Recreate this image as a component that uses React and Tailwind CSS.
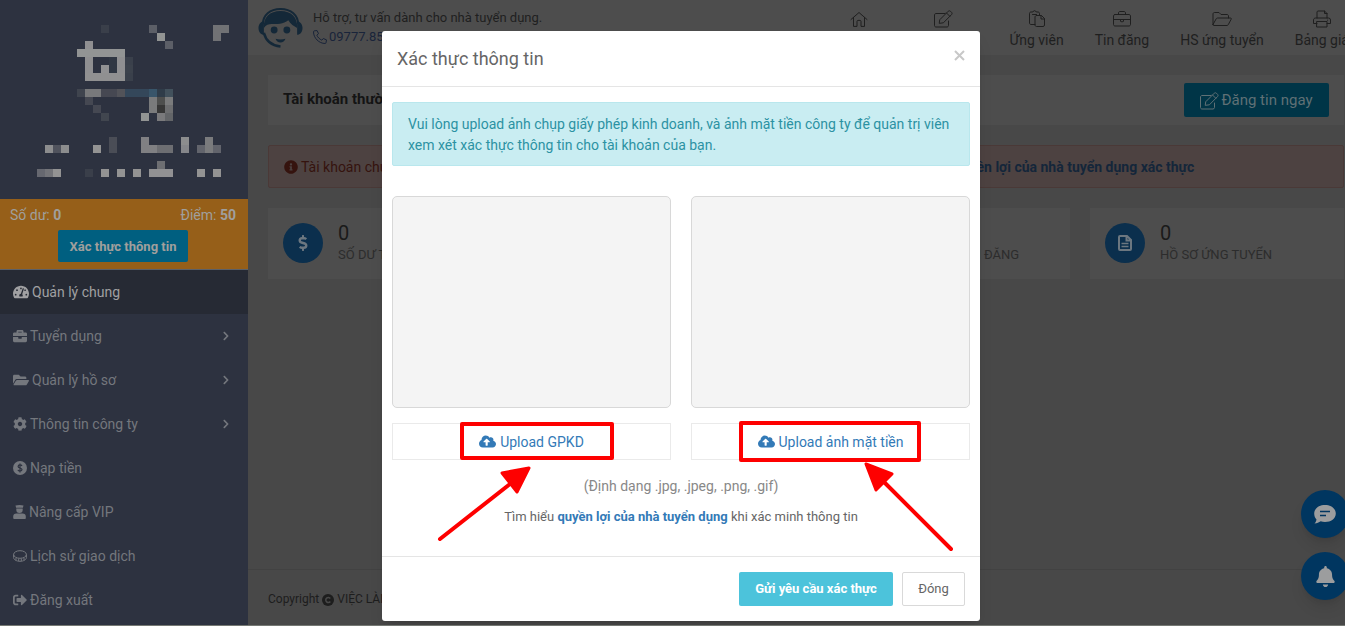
import {
  FaBell,
  FaBriefcase,
  FaChevronRight,
  FaCloudUploadAlt,
  FaCog,
  FaDollarSign,
  FaFolderOpen,
  FaInfoCircle,
  FaSignOutAlt,
  FaTachometerAlt,
} from 'react-icons/fa'

// [column, row, colour, cells wide] on an 8px grid
const logoCells = [
  [12, 3, '#3a3f4a'], [18, 3, '#5c5f67'], [26, 3, '#717275', 2],
  [19, 4, '#929493'], [26, 4, '#717275'],
  [10, 5, '#8f8f91'], [20, 5, '#5c5f67'],
  [9, 6, '#929494', 6],
  [10, 7, '#8f8f91'], [13, 7, '#303743'], [14, 7, '#8f8f91'], [15, 7, '#3a404b'],
  [10, 8, '#8f8f91'], [12, 8, '#919193'], [13, 8, '#303743'], [14, 8, '#8f8f91'], [15, 8, '#3c424c'],
  [10, 9, '#909091', 5], [15, 9, '#3a404b'],
  [9, 11, '#3f444e'], [10, 11, '#78797b', 2], [12, 11, '#464852', 2], [14, 11, '#525359'],
  [15, 11, '#34475a', 3], [18, 11, '#38556a'], [19, 11, '#2f3c49'], [20, 11, '#42515c'],
  [10, 12, '#454852'], [18, 12, '#7a7b7c'], [19, 12, '#4e4f4e'], [20, 12, '#7a7b7c'],
  [11, 13, '#454852'], [18, 13, '#7a7b7c'], [19, 13, '#373737'], [20, 13, '#6d6e70'],
  [12, 14, '#41464f'], [17, 14, '#929493'], [19, 14, '#7a7a7c'], [20, 14, '#636568'],
  [13, 17, '#4a4d56'], [17, 17, '#808083'], [22, 17, '#8c8d8e'], [25, 17, '#7a7b7d'],
  [5, 18, '#8c8d8e'], [6, 18, '#50535d'], [7, 18, '#8c8d8e'], [11, 18, '#939393'], [13, 18, '#4a4d56'],
  [17, 18, '#808083', 2], [19, 18, '#6d6e72', 2], [22, 18, '#85868a'], [24, 18, '#62646c'],
  [25, 18, '#7a7b7d'], [26, 18, '#62646c'],
  [19, 20, '#6d6e72'],
  [4, 21, '#666870'], [5, 21, '#737479'], [6, 21, '#939393'], [10, 21, '#3a3f4a'], [12, 21, '#939393'],
  [14, 21, '#939393'], [16, 21, '#939393'], [18, 21, '#919193', 3], [24, 21, '#939393'], [26, 21, '#939393'],
]

function Logo() {
  return (
    <svg width="248" height="199" viewBox="0 0 248 199" shapeRendering="crispEdges" aria-hidden="true">
      {logoCells.map(([c, r, fill, n = 1]) => (
        <rect key={`${c}-${r}`} x={5 + c * 8} y={1 + r * 8} width={8 * n} height="8" fill={fill} />
      ))}
    </svg>
  )
}

function CoinBadge() {
  return (
    <svg width="14" height="14" viewBox="0 0 14 14" aria-hidden="true">
      <circle cx="7" cy="7" r="7" fill="currentColor" />
      <path d="M9 4.9C8.6 4.2 7.900 3.900 7 3.900 5.900 3.900 5.100 4.500 5.100 5.400c0 2 3.900 1.100 3.900 3.200 0 .9-.8 1.500-2 1.500-1 0-1.800-.4-2.100-1.200M7 2.500v9" fill="none" stroke="#2d3240" strokeWidth="1.200" />
    </svg>
  )
}

function VipUser() {
  return (
    <svg width="13" height="14" viewBox="0 0 13 14" fill="currentColor" aria-hidden="true">
      <path d="M2.500.6 6.500 0l4 .6-.6 2.200H3.100zM3.300 3.500h6.400v1.200a3.200 3.200 0 0 1-6.400 0zM3.500 8.500h6A3.300 3.300 0 0 1 12.800 12v1c0 .6-.4 1-1 1H1.200a1 1 0 0 1-1-1v-1a3.300 3.300 0 0 1 3.300-3.500z" />
    </svg>
  )
}

function Coin() {
  return (
    <svg width="14" height="12" viewBox="0 0 14 12" fill="none" stroke="currentColor" aria-hidden="true">
      <ellipse cx="7" cy="4.500" rx="6.400" ry="3.800" />
      <path d="M.6 4.500v3c0 2.100 2.900 3.800 6.400 3.800s6.400-1.700 6.400-3.800v-3M3 8v2.500M5.700 8.500v2.700M8.300 8.500v2.700M11 8v2.500" />
    </svg>
  )
}

function Line({ width = 18, children }) {
  return (
    <svg width={width} height="18" viewBox={`0 0 ${width} 18`} fill="none" stroke="currentColor" strokeLinejoin="round" strokeLinecap="round" aria-hidden="true">
      {children}
    </svg>
  )
}

const HomeIcon = () => (
  <Line>
    <path d="M1 9.500 9 2.500l8 7M3.500 7.500v8.900H7v-5c0-.6.4-1 1-1h2c.6 0 1 .4 1 1v5h3.500V7.500" />
  </Line>
)

const EditIcon = () => (
  <Line width={20}>
    <path d="M11 3.500H2c-.8 0-1.500.7-1.500 1.500v10.500c0 .8.7 1.500 1.500 1.500h11c.8 0 1.500-.7 1.500-1.500v-4.500M6 9.500l8.300-8.300c.6-.6 1.500-.6 2.100 0l1.200 1.200c.6.6.6 1.500 0 2.100L9.400 12.800l-3.800.5zM12.500 3l3.300 3.300" />
  </Line>
)

const PasteIcon = () => (
  <Line width={16}>
    <path d="M6 14.500H2c-.8 0-1.500-.6-1.500-1.400V3.400C.5 2.600 1.200 2 2 2h1.800c.3-.9 1-1.300 1.700-1.300S7 1.100 7.300 2H9c.8 0 1.500.6 1.500 1.400V5M3.500 4.500h4M7.500 5.500h5l3 3V15c0 .8-.6 1.500-1.400 1.500H7.500C6.700 16.500 6 15.800 6 15V7c0-.8.700-1.500 1.500-1.500zM12 5.500V9h3.500" />
  </Line>
)

const CaseIcon = () => (
  <Line>
    <path d="M2 4.500h14c.8 0 1.500.7 1.500 1.500v8.500c0 .8-.7 1.500-1.500 1.500H2c-.8 0-1.500-.7-1.500-1.500V6c0-.8.7-1.500 1.500-1.500zM5.500 4.500V3c0-.8.6-1.500 1.400-1.500h4.200c.8 0 1.400.7 1.400 1.500v1.500M.5 9.500h17M7.500 9.500v1.600c0 .4.300.6.600.6h1.800c.3 0 .6-.2.6-.6V9.500" />
  </Line>
)

const FolderIcon = () => (
  <Line width={20}>
    <path d="M1 14V4c0-.8.6-1.500 1.400-1.500H7l2 2h6c.8 0 1.500.6 1.500 1.400V8M1 14.500l3.200-5.700c.3-.5.700-.8 1.300-.8h13c.7 0 1 .6.700 1.200l-2.900 5.400c-.3.5-.7.900-1.300.9H2c-.8 0-1.200-.5-1-1z" />
  </Line>
)

const PrintIcon = () => (
  <Line>
    <path d="M4 8V2c0-.6.5-1 1-1h6.500L14 3.500V8M11.500 1v2.500H14M4 13.500H.5V10c0-1.100.9-2 2-2h13a2 2 0 0 1 2 2v3.500H14M4 11.500h10V17H4zM14.500 10.200h.2" />
  </Line>
)

const PhoneIcon = () => (
  <svg width="14" height="14" viewBox="0 0 14 14" fill="none" stroke="currentColor" strokeLinejoin="round" aria-hidden="true">
    <path d="M1.200.9 4 .5l1.500 3.200-1.700 1.500c.9 2 2.600 3.800 5 5l1.500-1.700 3.200 1.400-.5 2.900c-.1.400-.4.700-.8.700C6 13.500.5 8 .5 1.800c0-.4.3-.8.700-.9z" />
  </svg>
)

function SupportFace() {
  return (
    <svg width="45" height="42" viewBox="0 0 46 42" aria-hidden="true">
      <path d="M5 17C5 8 12 1.500 23 1.500S41 8 41 17" fill="none" stroke="#142838" strokeWidth="2" />
      <path d="M6 21C5 10 12 3.500 23 3.500S41 10 40 21c-3-2-7-4-9-8-5 4-12 4-17 4-3 0-6 1-8 4z" fill="#142838" />
      <path d="M6 14c-3 0-5.500 3-5.500 7S3 28 6 28zM40 14c3 0 5.500 3 5.500 7S43 28 40 28z" fill="#142838" />
      <circle cx="16.500" cy="23" r="3.500" fill="#142838" />
      <circle cx="29.500" cy="23" r="3.500" fill="#142838" />
      <path d="M18 32c3 1 7 1 10 0-1 5-9 5-10 0z" fill="#142838" />
      <path d="M6 26c2 8 8 13 17 14" fill="none" stroke="#142838" strokeWidth="2.500" />
    </svg>
  )
}

const FileIcon = () => (
  <svg width="14" height="16" viewBox="0 0 14 16" fill="none" stroke="currentColor" strokeWidth="2" aria-hidden="true">
    <path d="M2 1h7l4 4v9c0 .6-.4 1-1 1H2c-.6 0-1-.4-1-1V2c0-.6.4-1 1-1zM8.500 1v4.500H13" />
    <path d="M3.500 8.500h7M3.500 11.500h7" strokeWidth="1.500" />
  </svg>
)

const menu = [
  { label: 'Quản lý chung', icon: <FaTachometerAlt size={16} />, active: true },
  { label: 'Tuyển dụng', icon: <FaBriefcase size={14} />, sub: true },
  { label: 'Quản lý hồ sơ', icon: <FaFolderOpen size={16} />, sub: true },
  { label: 'Thông tin công ty', icon: <FaCog size={14} />, sub: true },
  { label: 'Nạp tiền', icon: <CoinBadge /> },
  { label: 'Nâng cấp VIP', icon: <VipUser /> },
  { label: 'Lịch sử giao dịch', icon: <Coin /> },
  { label: 'Đăng xuất', icon: <FaSignOutAlt size={14} /> },
]

const topNav = [
  { label: 'Home', icon: <HomeIcon /> },
  { label: 'Tạo tin mới', icon: <EditIcon /> },
  { label: 'Ứng viên', icon: <PasteIcon /> },
  { label: 'Tin đăng', icon: <CaseIcon /> },
  { label: 'HS ứng tuyển', icon: <FolderIcon /> },
  { label: 'Bảng giá', icon: <PrintIcon /> },
]

const stats = [
  { label: 'SỐ DƯ TÀI KHOẢN', icon: <FaDollarSign size={16} /> },
  { label: 'ĐIỂM', icon: <FaDollarSign size={16} /> },
  { label: 'TẤT CẢ CÁC TIN ĐĂNG', icon: <FileIcon /> },
  { label: 'HỒ SƠ ỨNG TUYỂN', icon: <FileIcon /> },
]

function Sidebar() {
  return (
    <aside className="w-[248px] shrink-0 bg-[#2d3240] text-[#74777d]">
      <Logo />
      <div className="border-b border-[#5b6068] bg-[#965f19] pt-[6px] pr-3 pb-[7px] pl-[10px] text-[#a09f9d]">
        <div className="flex justify-between leading-5">
          <span>Số dư: <b>0</b></span>
          <span>Điểm: <b>50</b></span>
        </div>
        <button className="mx-auto mt-[5px] block h-8 w-[130px] rounded-xs bg-[#005f80] pt-[2px] text-[13px] font-bold">
          Xác thực thông tin
        </button>
      </div>
      <nav>
        {menu.map((item) => (
          <a
            key={item.label}
            href="#"
            className={
              item.active
                ? 'flex h-11 items-center gap-[3px] bg-[#262a34] pr-[17px] pl-[13px] text-[#a0a0a2]'
                : 'flex h-11 items-center gap-[3px] pr-[17px] pl-[13px]'
            }
          >
            {item.icon}
            <span>{item.label}</span>
            {item.sub && <FaChevronRight size={10} className="ml-auto" />}
          </a>
        ))}
      </nav>
    </aside>
  )
}

function Header() {
  return (
    <header className="flex h-[55px] bg-[#4d4d4d] pl-[10px] text-[#1f1f1f]">
      <div className="flex shrink-0 gap-[10px] pt-[7px]">
        <SupportFace />
        <div className="pt-px text-[13px] leading-[19px]">
          <div>Hỗ trợ, tư vấn dành cho nhà tuyển dụng.</div>
          <a href="#" className="flex items-center gap-[2px] text-[#19243a]">
            <PhoneIcon /> 09777.85.885
          </a>
        </div>
      </div>
      <nav className="-mr-1 ml-auto flex shrink-0 gap-[31px] pt-[10px]">
        {topNav.map((item) => (
          <a key={item.label} href="#" className="flex flex-col items-center gap-[2px] leading-5">
            {item.icon}
            {item.label}
          </a>
        ))}
      </nav>
    </header>
  )
}

function Dashboard() {
  return (
    <main className="pt-5 pr-px pl-5">
      <div className="flex h-[50px] items-center justify-between bg-[#4d4d4d] px-[15px]">
        <b className="text-[15px] text-[#141414]">Tài khoản thường</b>
        <button className="flex h-[34px] w-[145px] items-center justify-center gap-px rounded-xs bg-[#003547] pt-px text-[15px] text-[#5f7075]">
          <EditIcon /> Đăng tin ngay
        </button>
      </div>
      <div className="mt-5 flex h-[43px] items-center gap-[3px] rounded-xs border border-[#4a3937] bg-[#4d4241] px-[15px] whitespace-nowrap text-[#35130e]">
        <FaInfoCircle size={14} />
        <p>
          Tài khoản chưa được xác thực. Vui lòng cập nhật thông tin và giấy phép kinh doanh của công ty. Tìm hiểu{' '}
          <a href="#" className="font-bold text-[#14263a]">quyền lợi của nhà tuyển dụng xác thực</a>
        </p>
      </div>
      <div className="mt-5 grid grid-cols-4 gap-5">
        {stats.map((s) => (
          <div key={s.label} className="flex h-[71px] items-center gap-[15px] bg-[#4d4d4d] px-[15px] pb-px">
            <div className="flex size-10 shrink-0 items-center justify-center rounded-full bg-[#0b2f4d] text-[#6c7780]">
              {s.icon}
            </div>
            <div className="whitespace-nowrap">
              <div className="text-xl leading-6 text-[#1a1a1a]">0</div>
              <div className="text-[13px] leading-5 text-[#2c2c2c]">{s.label}</div>
            </div>
          </div>
        ))}
      </div>
    </main>
  )
}

function UploadSlot({ label }) {
  return (
    <div className="min-w-0 flex-1">
      <div className="h-[212px] rounded-[5px] border border-[#d8d8d8] bg-[#f4f4f4]" />
      <button className="mt-[15px] flex h-[37px] w-full items-center justify-center gap-1 border border-[#eaeaea] text-[#337ab7]">
        <FaCloudUploadAlt size={17} /> {label}
      </button>
    </div>
  )
}

// highlight frames and arrows laid over the dialog
function Marks() {
  return (
    <svg className="pointer-events-none absolute top-0 left-0" width="598" height="590" viewBox="0 0 598 590" fill="none" stroke="#fe0000" strokeWidth="4" strokeLinejoin="round" strokeLinecap="round" aria-hidden="true">
      <rect x="80" y="393" width="150" height="34" />
      <rect x="359" y="392" width="178" height="37" />
      <path d="M58 508 128 453M569 518 502 451" />
      <path d="M147 437 120 442 135 461zM484 433 510 443 494 459z" fill="#fe0000" strokeWidth="3" />
    </svg>
  )
}

function VerifyModal() {
  return (
    <div className="absolute inset-0 flex items-start justify-center pt-[31px] pl-[17px]">
      <div role="dialog" aria-labelledby="verify-title" className="relative w-[598px] rounded-[3px] bg-white text-[#666] shadow-lg">
        <div className="flex h-14 items-center justify-between border-b border-[#e5e5e5] px-[15px]">
          <h4 id="verify-title" className="text-lg">Xác thực thông tin</h4>
          <button aria-label="Đóng hộp thoại" className="pb-[6px] text-[#c8c8c8]">
            <svg width="11" height="11" viewBox="0 0 11 11" stroke="currentColor" strokeWidth="2" aria-hidden="true">
              <path d="m1 1 9 9M10 1l-9 9" />
            </svg>
          </button>
        </div>
        <div className="px-[10px] pt-[15px] pb-[29px] text-center">
          <div className="rounded-xs border border-[#b9e7ed] bg-[#c9edf2] px-[15px] pt-[11px] pb-[9px] text-left leading-[21px] text-[#2c92a3]">
            Vui lòng upload ảnh chụp giấy phép kinh doanh, và ảnh mặt tiền công ty để quản trị viên xem xét xác thực thông tin cho tài khoản của bạn.
          </div>
          <div className="mt-[30px] flex gap-5">
            <UploadSlot label="Upload GPKD" />
            <UploadSlot label="Upload ảnh mặt tiền" />
          </div>
          <p className="mt-4 leading-5 text-[#888]">(Định dạng .jpg, .jpeg, .png, .gif)</p>
          <p className="mt-[11px] text-[13px] leading-5">
            Tìm hiểu <a href="#" className="font-bold text-[#337ab7]">quyền lợi của nhà tuyển dụng</a> khi xác minh thông tin
          </p>
        </div>
        <div className="flex justify-end gap-[9px] border-t border-[#e5e5e5] p-[15px] text-[13px]">
          <button className="h-[34px] w-[154px] rounded-xs bg-[#4cc3db] font-bold text-white">
            Gửi yêu cầu xác thực
          </button>
          <button className="h-[34px] w-[63px] rounded-xs border border-[#d9d9d9]">Đóng</button>
        </div>
        <Marks />
      </div>
    </div>
  )
}

export default function App() {
  return (
    <div className="relative flex min-h-screen overflow-hidden border-b border-[#757873] bg-[#484848] font-[Roboto,sans-serif] text-sm">
      <Sidebar />
      <div className="flex min-w-0 flex-1 flex-col">
        <Header />
        <Dashboard />
        <footer className="mt-auto flex h-14 items-center gap-[3px] border-t border-[#424242] px-5 pt-1 text-[12px] text-[#1d1d1d]">
          Copyright
          <svg width="12" height="12" viewBox="0 0 12 12" aria-hidden="true">
            <circle cx="6" cy="6" r="6" fill="currentColor" />
            <path d="M8.300 4.500a2.500 2.500 0 1 0 0 3" fill="none" stroke="#484848" strokeWidth="1.500" />
          </svg>
          VIỆC LÀM
        </footer>
      </div>
      <VerifyModal />
      <div className="absolute -right-[4px] bottom-[25px] flex flex-col gap-[14px] text-[#9c9d9e]">
        <button aria-label="Tin nhắn" className="flex size-12 items-center justify-center rounded-full bg-[#003660] shadow-lg">
          <svg width="22" height="20" viewBox="0 0 22 20" aria-hidden="true">
            <path d="M11 1c6 0 10.800 3.500 10.800 8.500S17 18 11 18c-1.500 0-3-.3-4.300-.7C5 18.500 3 19.500.5 19.500c1-1 1.800-2.500 2-4C1.100 14 .2 12 .2 9.500.2 4.500 5 1 11 1z" fill="currentColor" />
            <path d="M6 7.500h10M6 11.500h6" stroke="#003660" strokeWidth="1.500" />
          </svg>
        </button>
        <button aria-label="Thông báo" className="flex size-12 items-center justify-center rounded-full bg-[#003660] shadow-lg">
          <FaBell size={21} />
        </button>
      </div>
    </div>
  )
}
